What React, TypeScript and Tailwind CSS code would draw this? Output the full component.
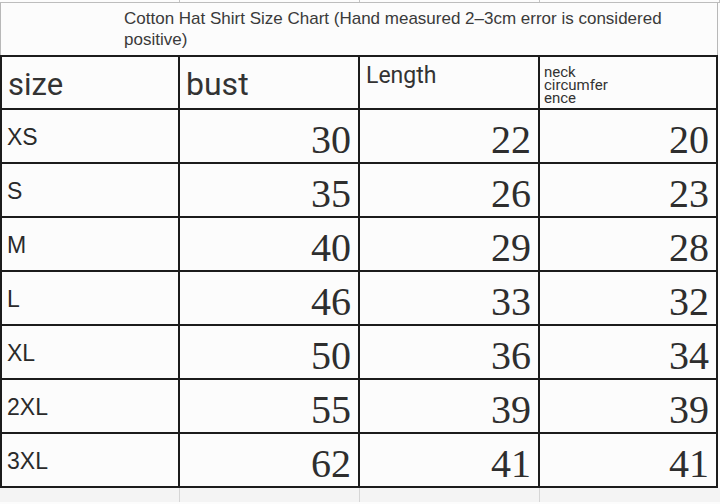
const rows: [string, number, number, number][] = [
  ["XS", 30, 22, 20],
  ["S", 35, 26, 23],
  ["M", 40, 29, 28],
  ["L", 46, 33, 32],
  ["XL", 50, 36, 34],
  ["2XL", 55, 39, 39],
  ["3XL", 62, 41, 41],
];

const sans = "font-['Roboto','Liberation_Sans',sans-serif]";
const serif = "font-['Liberation_Serif','DejaVu_Serif',serif]";

function NumCell({ value, last }: { value: number; last?: boolean }) {
  return (
    <div
      className={`flex h-[54px] items-center justify-end border-b-2 border-[#1c1c1c] pr-[7px] pt-[8px] ${
        last ? "" : "border-r-2"
      }`}
    >
      <span className={`${serif} text-[40px] leading-none text-[#2e2e2e]`}>{value}</span>
    </div>
  );
}

export default function App() {
  return (
    <div className={`h-[504px] w-[720px] overflow-hidden bg-[#fcfcfc] ${sans}`}>
      {/* strip of the row above */}
      <div className="grid h-[3px] grid-cols-[180px_180px_180px_180px] border-b border-[#bdbdbd]">
        <div className="border-r border-[#c4c4c4]" />
        <div className="border-r border-[#c4c4c4]" />
        <div className="border-r border-[#c4c4c4]" />
        <div className="border-r border-[#c4c4c4]" />
      </div>

      {/* title */}
      <div className="mr-[2px] h-[52px] border-x border-[#b8b8b8] pl-[123px] pt-[5px]">
        <p className="w-[570px] font-['Liberation_Sans','Roboto',sans-serif] text-[17px] leading-[21px] text-[#3a3a3a]">
          Cotton Hat Shirt Size Chart (Hand measured 2–3cm error is considered positive)
        </p>
      </div>

      {/* table */}
      <div className="w-[718px] border-l-2 border-r-2 border-t-2 border-[#1c1c1c]">
        <div className="grid grid-cols-[178px_180px_180px_176px]">
          <div className="flex h-[53px] items-center border-b-2 border-r-2 border-[#1c1c1c] pl-[6px] pt-[4px]">
            <span className="text-[31px] leading-none text-[#333]">size</span>
          </div>
          <div className="flex h-[53px] items-center border-b-2 border-r-2 border-[#1c1c1c] pl-[6px] pt-[2px]">
            <span className="text-[32px] leading-none text-[#333]">bust</span>
          </div>
          <div className="h-[53px] border-b-2 border-r-2 border-[#1c1c1c] pl-[6px] pt-[7px]">
            <span className="text-[23px] leading-none text-[#333]">Length</span>
          </div>
          <div className="h-[53px] border-b-2 border-[#1c1c1c] pl-[4px] pt-[9px]">
            <p className="w-[80px] text-[15px] leading-[13px] text-[#333]">neck circumfer ence</p>
          </div>

          {rows.map(([size, bust, length, neck]) => (
            <div key={size} className="contents">
              <div className="h-[54px] border-b-2 border-r-2 border-[#1c1c1c] pl-[5px] pt-[16px]">
                <span className="font-['Liberation_Sans','Roboto',sans-serif] text-[23px] leading-none text-[#2a2a2a]">
                  {size}
                </span>
              </div>
              <NumCell value={bust} />
              <NumCell value={length} />
              <NumCell value={neck} last />
            </div>
          ))}
        </div>
      </div>

      {/* strip of the row below */}
      <div className="grid h-[14px] grid-cols-[180px_180px_180px_180px] bg-[#f4f4f4]">
        <div className="border-r border-[#d6d6d6]" />
        <div className="border-r border-[#d6d6d6]" />
        <div className="border-r border-[#d6d6d6]" />
        <div />
      </div>
    </div>
  );
}
